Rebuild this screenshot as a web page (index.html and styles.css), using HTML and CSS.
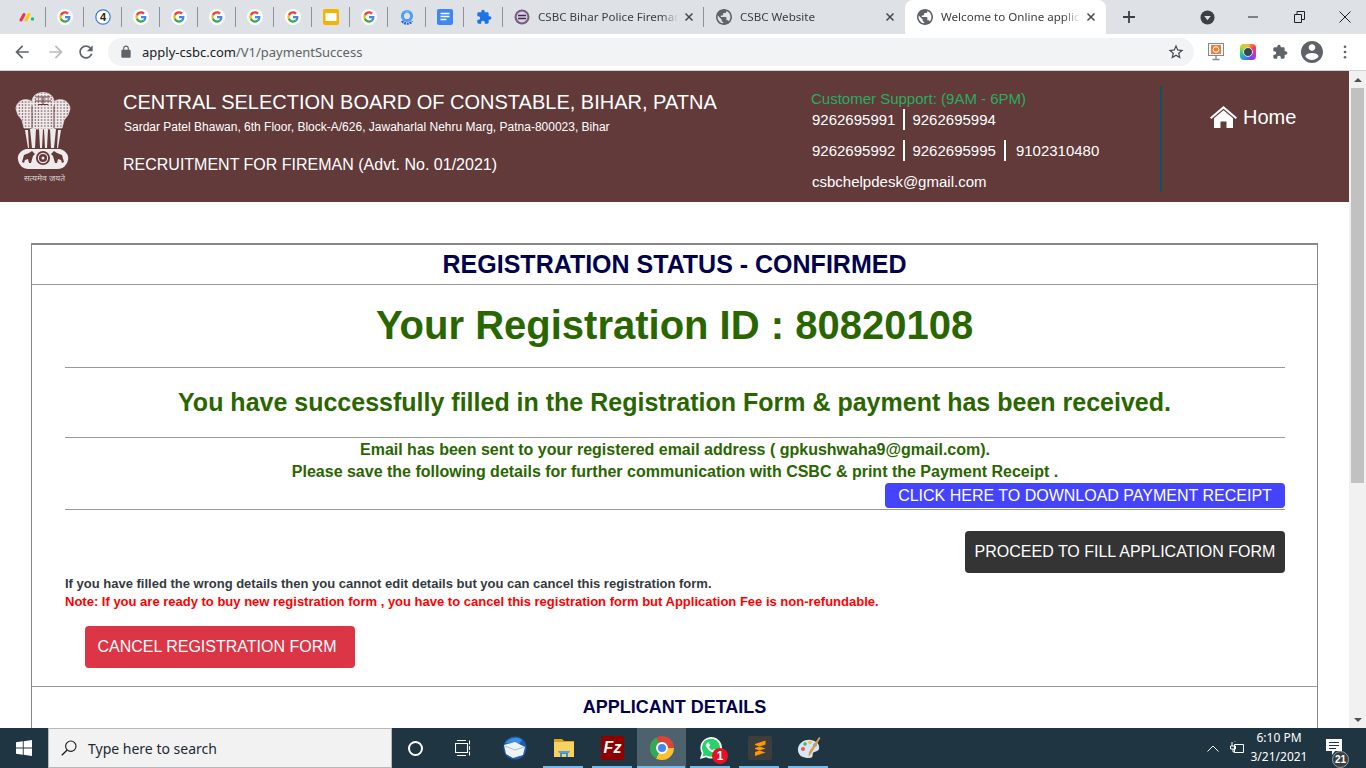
FILE: index.html
```html
<!DOCTYPE html>
<html lang="en">
<head>
<meta charset="utf-8">
<title>Welcome to Online application</title>
<link rel="stylesheet" href="styles.css">
</head>
<body>
<svg class="defs" width="0" height="0" aria-hidden="true">
  <defs>
    <symbol id="g" viewBox="-10 -10 68 68">
      <circle cx="24" cy="24" r="34" fill="#fff"/>
      <path fill="#EA4335" d="M24 9.5c3.54 0 6.71 1.22 9.21 3.6l6.85-6.85C35.9 2.38 30.47 0 24 0 14.62 0 6.51 5.38 2.56 13.22l7.98 6.19C12.43 13.72 17.74 9.5 24 9.5z"/>
      <path fill="#4285F4" d="M46.98 24.55c0-1.57-.15-3.09-.38-4.55H24v9.02h12.94c-.58 2.96-2.26 5.48-4.78 7.18l7.73 6c4.51-4.18 7.09-10.36 7.09-17.65z"/>
      <path fill="#FBBC05" d="M10.53 28.59c-.48-1.45-.76-2.99-.76-4.59s.27-3.14.76-4.59l-7.98-6.19C.92 16.46 0 20.12 0 24c0 3.88.92 7.54 2.56 10.78l7.97-6.19z"/>
      <path fill="#34A853" d="M24 48c6.48 0 11.93-2.13 15.89-5.81l-7.73-6c-2.15 1.45-4.92 2.3-8.16 2.3-6.26 0-11.57-4.22-13.47-9.91l-7.98 6.19C6.51 42.62 14.62 48 24 48z"/>
    </symbol>
    <symbol id="globe" viewBox="2 2 20 20">
      <path d="M12 2C6.48 2 2 6.48 2 12s4.48 10 10 10 10-4.48 10-10S17.52 2 12 2zm-1 17.93c-3.95-.49-7-3.85-7-7.93 0-.62.08-1.21.21-1.79L9 15v1c0 1.1.9 2 2 2v1.93zm6.9-2.54c-.26-.81-1-1.39-1.9-1.39h-1v-3c0-.55-.45-1-1-1H8v-2h2c.55 0 1-.45 1-1V7h2c1.1 0 2-.9 2-2v-.41c2.93 1.19 5 4.06 5 7.41 0 2.08-.8 3.97-2.1 5.39z"/>
    </symbol>
    <symbol id="puzzle" viewBox="0 0 24 24">
      <path d="M20.5 11H19V7c0-1.1-.9-2-2-2h-4V3.5C13 2.12 11.88 1 10.5 1S8 2.12 8 3.5V5H4c-1.1 0-1.99.9-1.99 2v3.8H3.5c1.49 0 2.7 1.21 2.7 2.7s-1.21 2.7-2.7 2.7H2V20c0 1.1.9 2 2 2h3.8v-1.5c0-1.49 1.21-2.7 2.7-2.7 1.49 0 2.7 1.21 2.7 2.7V22H17c1.1 0 2-.9 2-2v-4h1.5c1.38 0 2.5-1.12 2.5-2.5S21.88 11 20.5 11z"/>
    </symbol>
    <symbol id="x" viewBox="0 0 10 10">
      <path d="M1.5 1.5l7 7M8.5 1.5l-7 7" fill="none" stroke="#45484c" stroke-width="1.5"/>
    </symbol>
    <pattern id="mottle" width="3.2" height="3" patternUnits="userSpaceOnUse">
      <rect width="3.2" height="3" fill="#efeaec"/>
      <circle cx="1.1" cy="1" r=".75" fill="#63393a"/>
    </pattern>
  </defs>
</svg>

<div class="tabstrip">
  <div class="pin"><svg class="ico16" viewBox="0 0 16 16"><path d="M2 11L5 5.5" stroke="#f0314f" stroke-width="3" stroke-linecap="round"/><path d="M7 11l3-5.5" stroke="#ffcb00" stroke-width="3" stroke-linecap="round"/><circle cx="13.5" cy="10" r="1.7" fill="#00ca72"/></svg></div>
  <div class="pin"><svg class="ico16"><use href="#g"/></svg></div>
  <div class="pin"><svg class="ico16" viewBox="0 0 16 16"><circle cx="8" cy="8" r="7.2" fill="#fff" stroke="#3b78e7" stroke-width="1.2"/><text x="8" y="12" class="four">4</text></svg></div>
  <div class="pin"><svg class="ico16"><use href="#g"/></svg></div>
  <div class="pin"><svg class="ico16"><use href="#g"/></svg></div>
  <div class="pin"><svg class="ico16"><use href="#g"/></svg></div>
  <div class="pin"><svg class="ico16"><use href="#g"/></svg></div>
  <div class="pin"><svg class="ico16"><use href="#g"/></svg></div>
  <div class="pin"><svg class="ico16" viewBox="0 0 16 16"><rect width="16" height="16" rx="2" fill="#f4b400"/><rect x="2.5" y="4" width="11" height="8" fill="#fff"/></svg></div>
  <div class="pin"><svg class="ico16"><use href="#g"/></svg></div>
  <div class="pin"><svg class="ico16" viewBox="0 0 16 16"><circle cx="8" cy="7" r="4.6" fill="none" stroke="#4d9df5" stroke-width="3"/><path d="M3 12c2 3.500 8 3.500 10 0" fill="none" stroke="#2a5fd6" stroke-width="2.4" stroke-dasharray="2 .8"/><path d="M8 .6l2.5 3.4h-5z" fill="#6fb4f8"/></svg></div>
  <div class="pin"><svg class="ico16" viewBox="0 0 16 16"><rect width="16" height="16" rx="2" fill="#4285f4"/><path d="M3.5 4.5h9M3.5 7.5h9M3.5 10.5h6" stroke="#fff" stroke-width="1.5"/></svg></div>
  <div class="pin pin-last"><svg class="ico16 blue"><use href="#puzzle"/></svg></div>

  <div class="tab tab-first">
    <svg class="ico14" viewBox="0 0 16 16"><circle cx="8" cy="8" r="7.5" fill="#7b5a86"/><circle cx="8" cy="8" r="5.4" fill="#d9d3e0"/><path d="M4 6.5h8M4 9.5h8" stroke="#3a2a55" stroke-width="1.4"/></svg>
    <span class="tab-title">CSBC Bihar Police Fireman</span>
    <svg class="tab-x"><use href="#x"/></svg>
  </div>
  <div class="tab tab-second">
    <svg class="ico14 grey"><use href="#globe"/></svg>
    <span class="tab-title">CSBC Website</span>
    <svg class="tab-x"><use href="#x"/></svg>
  </div>
  <div class="tab tab-active">
    <svg class="ico14 grey"><use href="#globe"/></svg>
    <span class="tab-title">Welcome to Online application</span>
    <svg class="tab-x"><use href="#x"/></svg>
  </div>
  <svg class="newtab" viewBox="0 0 12 12"><path d="M6 0v12M0 6h12" stroke="#3c4043" stroke-width="1.8"/></svg>
  <div class="winctl">
    <svg class="profile" viewBox="0 0 16 16"><circle cx="8" cy="8" r="7.5" fill="#3c4043"/><path d="M4.5 6.5h7L8 11z" fill="#dee1e6"/></svg>
    <svg class="min" viewBox="0 0 10 10"><path d="M0 5h10" stroke="#202124"/></svg>
    <svg class="rest" viewBox="0 0 11 12"><path d="M.5 3.5h7v8h-7zM3 3.5V.5h7.5v8H7.5" fill="none" stroke="#202124"/></svg>
    <svg class="close" viewBox="0 0 12 12"><path d="M.5.5l11 11M11.500.5l-11 11" stroke="#202124"/></svg>
  </div>
</div>

<div class="toolbar">
  <svg class="nav" viewBox="0 0 24 24"><path d="M20 11H7.830l5.590-5.590L12 4l-8 8 8 8 1.410-1.410L7.830 13H20v-2z"/></svg>
  <svg class="nav nav-off" viewBox="0 0 24 24"><path d="M4 11h12.170l-5.590-5.590L12 4l8 8-8 8-1.410-1.410L16.170 13H4v-2z"/></svg>
  <svg class="nav nav-reload" viewBox="0 0 24 24"><path d="M17.650 6.350C16.200 4.900 14.210 4 12 4c-4.420 0-7.990 3.580-7.990 8s3.570 8 7.990 8c3.730 0 6.840-2.550 7.730-6h-2.080c-.82 2.330-3.040 4-5.650 4-3.310 0-6-2.690-6-6s2.690-6 6-6c1.660 0 3.140.69 4.220 1.780L13 11h7V4l-2.350 2.350z"/></svg>
  <div class="omnibox">
    <svg class="lock" viewBox="0 0 24 24"><path d="M18 8h-1V6c0-2.760-2.240-5-5-5S7 3.240 7 6v2H6c-1.100 0-2 .9-2 2v10c0 1.100.9 2 2 2h12c1.100 0 2-.9 2-2V10c0-1.100-.9-2-2-2zM9 6c0-1.660 1.340-3 3-3s3 1.340 3 3v2H9V6z"/></svg>
    <span class="url"><span class="url-host">apply-csbc.com</span>/V1/paymentSuccess</span>
    <svg class="star" viewBox="0 0 24 24"><path d="M22 9.240l-7.190-.62L12 2 9.190 8.630 2 9.240l5.460 4.730L5.820 21 12 17.270 18.180 21l-1.630-7.030L22 9.240zM12 15.400l-3.760 2.270 1-4.280-3.320-2.880 4.380-.38L12 6.100l1.710 4.040 4.380.38-3.320 2.880 1 4.280L12 15.400z"/></svg>
  </div>
  <div class="exts">
    <svg class="ext ext-screen" viewBox="0 0 16 18"><rect x=".5" y=".5" width="15" height="12" fill="#f4f6f8" stroke="#7d8b95"/><rect x="3" y="2" width="10" height="9" fill="#ee7f3a"/><circle cx="8" cy="6.500" r="2.800" fill="none" stroke="#fff"/><path d="M8 13v3M4.500 16.500h7" stroke="#7d8b95" stroke-width="1.300"/></svg>
    <div class="ext-lens"><span class="lens-core"></span></div>
    <svg class="ext ext-puzzle"><use href="#puzzle"/></svg>
    <svg class="avatar" viewBox="2 2 20 20"><path d="M12 2C6.480 2 2 6.480 2 12s4.480 10 10 10 10-4.480 10-10S17.520 2 12 2zm0 3c1.660 0 3 1.340 3 3s-1.340 3-3 3-3-1.340-3-3 1.340-3 3-3zm0 14.200c-2.500 0-4.710-1.280-6-3.220.03-1.990 4-3.080 6-3.080 1.990 0 5.970 1.090 6 3.080-1.290 1.940-3.500 3.220-6 3.220z"/></svg>
    <svg class="dots" viewBox="0 0 4 16"><circle cx="2" cy="2" r="1.500"/><circle cx="2" cy="8" r="1.500"/><circle cx="2" cy="14" r="1.500"/></svg>
  </div>
</div>

<div class="viewport">
  <main class="page">
    <header class="site-header">
      <div class="logo">
        <svg class="emblem" viewBox="0 0 56 79">
          <g fill="url(#mottle)" stroke="#efeaec" stroke-width=".7">
            <path d="M1 17c0-4 3-8 7-9 4-1 8 0 10 3l2 5-1 7 1 13H9l-2-8-4-5z"/>
            <path d="M55 17c0-4-3-8-7-9-4-1-8 0-10 3l-2 5 1 7-1 13h11l2-8 4-5z"/>
            <path d="M17 37l-1-14 3-7-2-6c0-6 5-9.500 11-9.500s11 3.500 11 9.500l-2 6 3 7-1 14z"/>
          </g>
          <path d="M21 5h14M20 9h16M23 12.500h10M28 5v8" stroke="#63393a" stroke-width="1"/>
          <path d="M17 14v22M39 14v22" stroke="#63393a" stroke-width=".9"/>
          <path d="M15 37l2 19h3l1-19zM24 37l1 19h2l1-19zM29 37l1 19h2l1-19zM35 37l1 19h3l2-19z" fill="#efeaec"/>
          <path d="M10 38l3 18h1l-1-18zM46 38l-3 18h-1l1-18z" fill="#efeaec"/>
          <path d="M11 57h34c6 2 9 6 8 11-1 5-5 9-10 9H13c-5 0-9-4-10-9-1-5 2-9 8-11z" fill="#efeaec"/>
          <circle cx="28" cy="66" r="7" fill="#63393a"/>
          <circle cx="28" cy="66" r="4.600" fill="none" stroke="#efeaec" stroke-width="1.100"/>
          <circle cx="28" cy="66" r="1.500" fill="#efeaec"/>
          <path d="M7 70l2-7 5-2 3-2 3 3-2 2-2 7h-2l-1-4-3 1-1 3zM49 70l-2-7-5-2-3-2-3 3 2 2 2 7h2l1-4 3 1 1 3z" fill="#63393a"/>
        </svg>
        <div class="motto">सत्यमेव जयते</div>
      </div>
      <div class="hinfo">
        <div class="board">CENTRAL SELECTION BOARD OF CONSTABLE, BIHAR, PATNA</div>
        <div class="addr">Sardar Patel Bhawan, 6th Floor, Block-A/626, Jawaharlal Nehru Marg, Patna-800023, Bihar</div>
        <div class="recruit">RECRUITMENT FOR FIREMAN (Advt. No. 01/2021)</div>
      </div>
      <div class="contact">
        <div class="support">Customer Support: (9AM - 6PM)</div>
        <div class="phones"><span class="ph ph-sep">9262695991</span><span class="ph">9262695994</span></div>
        <div class="phones"><span class="ph ph-sep">9262695992</span><span class="ph ph-sep">9262695995</span><span class="ph ph-last">9102310480</span></div>
        <div class="phones mail">csbchelpdesk@gmail.com</div>
      </div>
      <a class="home">
        <svg class="home-ico" viewBox="0 0 27 22"><path d="M13.500 0L0 11.500l1.300 1.500L13.500 2.700 25.700 13l1.300-1.500z" fill="#fff"/><path d="M13.500 4.300L4 12.300V22h6.500v-6.500h6V22H23v-9.700z" fill="#fff"/></svg>
        <span>Home</span>
      </a>
    </header>

    <section class="panel">
      <h2 class="status">REGISTRATION STATUS - CONFIRMED</h2>
      <div class="panel-body">
        <h1 class="regid">Your Registration ID : 80820108</h1>
        <hr class="rule">
        <h3 class="success">You have successfully filled in the Registration Form &amp; payment has been received.</h3>
        <hr class="rule">
        <p class="mailnote">Email has been sent to your registered email address ( gpkushwaha9@gmail.com).<br>Please save the following details for further communication with CSBC &amp; print the Payment Receipt .</p>
        <div class="right"><a class="btn btn-blue">CLICK HERE TO DOWNLOAD PAYMENT RECEIPT</a></div>
        <hr class="rule rule-tight">
        <div class="right right-gap"><a class="btn btn-dark">PROCEED TO FILL APPLICATION FORM</a></div>
        <p class="warn">If you have filled the wrong details then you cannot edit details but you can cancel this registration form.</p>
        <p class="warn warn-red">Note: If you are ready to buy new registration form , you have to cancel this registration form but Application Fee is non-refundable.</p>
        <a class="btn btn-red">CANCEL REGISTRATION FORM</a>
      </div>
      <h2 class="applicant">APPLICANT DETAILS</h2>
    </section>
  </main>
  <div class="scrollbar">
    <div class="sb-arrow"><span class="tri tri-up"></span></div>
    <div class="sb-thumb"></div>
    <div class="sb-track"></div>
    <div class="sb-arrow"><span class="tri tri-down"></span></div>
  </div>
</div>

<footer class="taskbar">
  <div class="start"><svg class="win" viewBox="0 0 16 16"><path d="M0 2.300L6.800 1.300V7.600H0zM7.700 1.200L16 0V7.600H7.700zM0 8.400H6.800V14.700L0 13.700zM7.700 8.400H16V16L7.700 14.800z" fill="#fff"/></svg></div>
  <div class="search">
    <svg class="glass" viewBox="0 0 16 16"><circle cx="9.800" cy="6.200" r="5.200" fill="none" stroke="#1a1a1a" stroke-width="1.100"/><path d="M6.200 10L.8 15.300" stroke="#1a1a1a" stroke-width="1.300"/></svg>
    <span class="search-text">Type here to search</span>
  </div>
  <div class="tb-sys"><span class="cortana"></span></div>
  <div class="tb-sys"><svg class="taskview" viewBox="0 0 16 16"><path d="M2 .5h9M2 15.500h9M.5 3.500h12v9H.5zM14.500.5v4M14.500 6v4M14.500 11.500v4" fill="none" stroke="#fff" stroke-width="1.100"/></svg></div>
  <div class="tb-app">
    <svg class="app" viewBox="0 0 24 24"><circle cx="12" cy="12" r="11.500" fill="#1f5fae"/><path d="M2 7c4-5 12-7 17-3l-3 4z" fill="#3d8fe0"/><path d="M1 9l11-3 10 5-2 8-10 3-7-4z" fill="#eef3f8"/><path d="M2 10l10 4 9-3" fill="none" stroke="#a8bdd2"/></svg>
  </div>
  <div class="tb-app tb-run">
    <svg class="app" viewBox="0 0 24 24"><path d="M2 3h8l2 2h10v4H2z" fill="#d9a520"/><rect x="2" y="6" width="20" height="15" fill="#fad35f"/><path d="M8 21v-6h8v6h-2v-3h-4v3z" fill="#3b8fd8"/><path d="M6 15h12l-1 2H7z" fill="#4aa3e8"/></svg>
  </div>
  <div class="tb-app tb-run">
    <div class="fz">Fz</div>
  </div>
  <div class="tb-app tb-run tb-active"><div class="chrome"><span class="chrome-core"></span></div></div>
  <div class="tb-app tb-run">
    <svg class="app" viewBox="0 0 24 24"><path d="M1 23l1.700-6A10.800 10.800 0 1 1 7 21.300z" fill="#fff"/><path d="M3.500 20.500l1-3.800A9 9 0 1 1 7.500 19.500z" fill="#25d366"/><path d="M8.500 6.500c-1.500 1-1.800 3-.5 5.300 1.500 2.500 4 4.500 6.300 4.800 1.500.2 3-.8 3.200-2l-2.700-1.500-1.200 1.200c-1.500-.5-3-2-3.600-3.500l1-1.200-1-3z" fill="#fff"/></svg>
    <span class="wa-badge">1</span>
  </div>
  <div class="tb-app tb-run">
    <svg class="app" viewBox="0 0 24 24"><rect width="24" height="24" rx="2" fill="#3d3d3d"/><path d="M17.500 4.500L7 8v4l10.500-3.500zM7 9l10.500 3.500v4L7 13zM17.500 12.500L7 16v4l10.500-3.500z" fill="#ff9800"/></svg>
  </div>
  <div class="tb-app tb-run">
    <svg class="app" viewBox="0 0 24 24"><path d="M1 15C0 8 7 3 14 4c6 .8 9 5 8 9-1 3-5 2-6 4s1 5-4 5C6 22 2 20 1 15z" fill="#d7e6f2"/><circle cx="6" cy="13" r="2" fill="#e05a4e"/><circle cx="8" cy="8" r="1.800" fill="#53b25b"/><circle cx="13" cy="6.500" r="1.800" fill="#f0c23d"/><circle cx="18" cy="9" r="1.800" fill="#4a90d9"/><path d="M22 1l1.500 1-9 15-3 4 .5-5z" fill="#d79a4c"/></svg>
  </div>
  <div class="tray">
    <svg class="chev" viewBox="0 0 12 7"><path d="M.5 6.500L6 1l5.500 5.500" fill="none" stroke="#fff"/></svg>
    <svg class="power" viewBox="0 0 16 14"><path d="M5.500 3.500h9v8h-9zM3 1v4M6 1v-.5M1.500 5h5v3h-5zM4 8v3h1.500" fill="none" stroke="#fff"/></svg>
    <div class="clock"><div>6:10 PM</div><div>3/21/2021</div></div>
    <div class="notif">
      <svg class="notif-ico" viewBox="0 0 16 16"><path d="M0 0h16v12H9l-3 4v-4H0z" fill="#fff"/><path d="M3 3.500h10M3 6.500h10M3 9.500h7" stroke="#1f3541"/></svg>
      <span class="notif-badge">21</span>
    </div>
  </div>
</footer>
</body>
</html>
```

FILE: styles.css
```css
* { box-sizing: border-box; }
html, body { margin: 0; padding: 0; height: 100%; }
body {
  width: 1366px;
  height: 768px;
  overflow: hidden;
  display: flex;
  flex-direction: column;
  background: #fff;
  font-family: "Liberation Sans", Arial, sans-serif;
}
.defs { position: absolute; }

/* tab strip */
.tabstrip {
  height: 34px;
  flex: none;
  display: flex;
  align-items: center;
  padding-left: 8px;
  background: #dee1e6;
  font: 11.6px "Noto Sans", sans-serif;
  color: #3c4043;
}
.pin {
  width: 38px;
  height: 20px;
  flex: none;
  display: flex;
  align-items: center;
  justify-content: center;
  border-right: 1px solid #8f9296;
  padding-left: 1px;
}
.pin-last { border-right: 0; }
.ico16 { width: 16px; height: 16px; flex: none; }
.ico14 { width: 16px; height: 16px; flex: none; }
.blue { fill: #1a73e8; }
.grey { fill: #5f6368; }
.four { font: bold 11px "Liberation Sans", sans-serif; fill: #222; text-anchor: middle; }
.tab {
  height: 34px;
  flex: none;
  display: flex;
  align-items: center;
  position: relative;
}
.tab-first {
  width: 202px;
  padding-left: 11px;
  border-left: 1px solid #8f9296;
  height: 20px;
  border-right: 1px solid #8f9296;
}
.tab-second { width: 201px; padding-left: 12px; }
.tab-active {
  width: 201px;
  padding-left: 12px;
  background: #fff;
  border-radius: 8px 8px 0 0;
}
.tab-title {
  margin-left: 8px;
  padding-bottom: 2px;
  flex: 1;
  min-width: 0;
  white-space: nowrap;
  overflow: hidden;
  -webkit-mask-image: linear-gradient(to right, #000 88%, transparent);
  mask-image: linear-gradient(to right, #000 88%, transparent);
}
.tab-x { width: 10px; height: 10px; flex: none; margin: 0 10px 0 6px; }
.tab-first .tab-x { margin-right: 9px; }
.newtab { width: 12px; height: 12px; flex: none; margin-left: 17px; }
.winctl { flex: 1; display: flex; align-items: center; height: 34px; }
.profile { width: 15px; height: 15px; flex: none; margin-left: 65px; }
.min { width: 10px; height: 10px; flex: none; margin-left: 33px; }
.rest { width: 11px; height: 12px; flex: none; margin-left: 36px; }
.close { width: 12px; height: 12px; flex: none; margin-left: 34px; }

/* toolbar */
.toolbar {
  height: 37px;
  flex: none;
  display: flex;
  align-items: center;
  background: #fff;
  padding-left: 12px;
  border-bottom: 1px solid #cfd2d6;
  font: 13px "Noto Sans", sans-serif;
}
.nav { width: 20px; height: 20px; flex: none; fill: #5f6368; }
.nav-off { fill: #b9bbbe; margin-left: 14px; }
.nav-reload { margin-left: 10px; }
.omnibox {
  width: 1086px;
  height: 28px;
  margin-left: 12px;
  flex: none;
  display: flex;
  align-items: center;
  background: #f1f3f4;
  border-radius: 14px;
  padding-left: 11px;
  color: #5f6368;
}
.lock { width: 14px; height: 14px; fill: #5f6368; flex: none; }
.url { margin-left: 9px; flex: 1; }
.url-host { color: #202124; }
.star { width: 18px; height: 18px; fill: #45484c; flex: none; margin-right: 9px; }
.exts { display: flex; align-items: center; flex: 1; }
.ext-screen { width: 16px; height: 18px; margin-left: 14px; flex: none; }
.ext-lens {
  width: 16px;
  height: 16px;
  margin-left: 16px;
  flex: none;
  border-radius: 4px;
  background: conic-gradient(#ffb52e, #f5433c, #d42fd0, #7b3ff2, #2f8cf5, #27c98f, #b8d92e, #ffb52e);
  display: flex;
  align-items: center;
  justify-content: center;
}
.lens-core { width: 10px; height: 10px; border-radius: 50%; background: #33475b; border: 1px solid #dfe7ee; }
.ext-puzzle { width: 16px; height: 16px; fill: #5f6368; margin-left: 16px; flex: none; }
.avatar { width: 22px; height: 22px; fill: #5f6368; margin-left: 13px; flex: none; }
.dots { width: 4px; height: 14px; fill: #5f6368; margin-left: 20px; flex: none; }

/* page viewport */
.viewport { flex: 1; min-height: 0; display: flex; overflow: hidden; }
.page { width: 1349px; flex: none; overflow: hidden; }
.site-header {
  height: 131px;
  display: flex;
  background: #633a3a;
  color: #fff;
}
.logo { width: 123px; flex: none; padding: 21px 0 0 15px; }
.emblem { display: block; width: 56px; height: 79px; }
.motto {
  width: 56px;
  margin-top: 1px;
  padding-left: 3px;
  text-align: center;
  font: 8.5px "Noto Sans", "DejaVu Sans", sans-serif;
  color: #d8cfcf;
  white-space: nowrap;
}
.hinfo { width: 688px; flex: none; padding-top: 20px; }
.board { font-size: 20px; line-height: 23px; white-space: nowrap; }
.addr { font-size: 12px; line-height: 14px; margin-top: 6px; padding-left: 1px; white-space: nowrap; }
.recruit { font-size: 16px; line-height: 18px; margin-top: 22px; }
.contact {
  width: 351px;
  flex: none;
  margin: 15px 0 10px;
  padding-top: 4px;
  border-right: 2px solid #0d5460;
}
.support { font-size: 15px; line-height: 18px; color: #27ae60; }
.phones { display: flex; align-items: center; height: 21px; margin: 1px 0 10px 1px; font-size: 15px; }
.phones + .phones { margin-top: 0; }
.mail { margin-bottom: 0; }
.ph { line-height: 21px; padding-right: 8px; margin-right: 7px; }
.ph-sep { border-right: 2px solid #fff; }
.ph-last { margin-left: 3px; }
.home { flex: 1; display: flex; align-items: center; height: 22px; margin-top: 35px; padding-left: 48px; font-size: 20px; }
.home-ico { width: 27px; height: 22px; flex: none; margin-right: 6px; }

/* panel */
.panel {
  margin: 41px 31px 0;
  border: 1px solid #888;
  border-top-width: 2px;
  background: #fff;
}
.status {
  margin: 0;
  height: 40px;
  border-bottom: 1px solid #999;
  text-align: center;
  font-size: 25px;
  line-height: 38px;
  color: #00004d;
}
.panel-body { padding: 0 32px 18px 33px; border-bottom: 1px solid #999; }
.regid {
  margin: 0;
  height: 82px;
  padding-right: 1px;
  text-align: center;
  font-size: 40px;
  line-height: 81px;
  color: #2a6600;
}
.rule { margin: 0; height: 1px; border: 0; background: #999; }
.rule-tight { margin-top: 1px; }
.success {
  margin: 0;
  height: 69px;
  padding-right: 1px;
  text-align: center;
  font-size: 25px;
  line-height: 69px;
  color: #2a6600;
}
.mailnote {
  margin: 0;
  padding-top: 1px;
  text-align: center;
  font-size: 16px;
  font-weight: bold;
  line-height: 22px;
  color: #2a6600;
}
.right { display: flex; justify-content: flex-end; }
.right-gap { margin-top: 21px; }
.btn {
  display: flex;
  align-items: center;
  justify-content: center;
  color: #fff;
  font-size: 16px;
  border-radius: 4px;
  white-space: nowrap;
}
.btn-blue { width: 400px; height: 25px; background: #4444ff; }
.btn-dark { width: 320px; height: 42px; background: #343434; }
.btn-red { width: 270px; height: 42px; margin: 15px 0 0 20px; background: #dc3545; padding-right: 6px; }
.warn {
  margin: 0;
  font-size: 13px;
  font-weight: bold;
  line-height: 18px;
  color: #343a40;
}
.right-gap + .warn { margin-top: 2px; }
.warn-red { color: #ff0000; }
.applicant {
  margin: 0;
  height: 60px;
  text-align: center;
  font-size: 18px;
  line-height: 41px;
  color: #00004d;
}

/* scrollbar */
.scrollbar { width: 17px; flex: none; display: flex; flex-direction: column; background: #f1f1f1; }
.sb-arrow { height: 17px; flex: none; display: flex; align-items: center; justify-content: center; }
.tri { width: 0; height: 0; border-left: 4px solid transparent; border-right: 4px solid transparent; }
.tri-up { border-bottom: 4px solid #505050; }
.tri-down { border-top: 4px solid #505050; }
.sb-thumb { height: 395px; flex: none; margin: 0 2px; background: #c1c1c1; }
.sb-track { flex: 1; }

/* taskbar */
.taskbar {
  height: 40px;
  flex: none;
  display: flex;
  align-items: stretch;
  background: #1f3541;
  color: #fff;
  font-family: "Noto Sans", sans-serif;
}
.start { width: 48px; flex: none; display: flex; align-items: center; justify-content: center; }
.win { width: 16px; height: 16px; }
.search {
  width: 344px;
  flex: none;
  display: flex;
  align-items: center;
  background: #f2f2f2;
  border: 1px solid #b5b9bc;
  padding-left: 12px;
  color: #1a2a35;
  font-size: 14px;
}
.glass { width: 16px; height: 16px; flex: none; }
.search-text { margin-left: 11px; }
.tb-sys { width: 47px; flex: none; display: flex; align-items: center; justify-content: center; }
.cortana { width: 15px; height: 15px; border-radius: 50%; border: 2px solid #fff; }
.taskview { width: 16px; height: 16px; }
.tb-app {
  width: 49px;
  flex: none;
  display: flex;
  align-items: center;
  justify-content: center;
  position: relative;
}
.tb-sys + .tb-sys { margin-right: 4px; }
.tb-run::after {
  content: "";
  position: absolute;
  left: 4px;
  right: 5px;
  bottom: 0;
  height: 2px;
  background: #76b9ed;
}
.tb-active { background: #4d626c; }
.tb-active::after { left: 0; right: 1px; }
.app { width: 24px; height: 24px; }
.fz {
  width: 23px;
  height: 24px;
  background: #8f0000;
  color: #fff;
  font: italic bold 16px/24px "Liberation Sans", sans-serif;
  text-align: center;
}
.chrome {
  width: 24px;
  height: 24px;
  border-radius: 50%;
  background: conic-gradient(#db4437 0deg, #db4437 90deg, #fbc02d 90deg, #fbc02d 210deg, #34a853 210deg, #34a853 330deg, #db4437 330deg);
  display: flex;
  align-items: center;
  justify-content: center;
}
.chrome-core { box-sizing: content-box; width: 8px; height: 8px; border-radius: 50%; background: #4285f4; border: 2px solid #fff; }
.wa-badge {
  position: absolute;
  left: 26px;
  top: 20px;
  width: 16px;
  height: 16px;
  border-radius: 50%;
  background: #e81123;
  color: #fff;
  font: bold 12px/16px "Liberation Sans", sans-serif;
  text-align: center;
}
.tray { flex: 1; display: flex; align-items: center; padding-left: 374px; }
.chev { width: 12px; height: 7px; flex: none; }
.power { width: 16px; height: 14px; flex: none; margin-left: 10px; }
.clock { width: 68px; flex: none; padding-bottom: 2px; text-align: center; font-size: 12px; line-height: 19px; }
.notif { position: relative; width: 24px; height: 40px; margin-left: 9px; flex: none; }
.notif-ico { position: absolute; left: 4px; top: 11px; width: 16px; height: 16px; }
.notif-badge {
  position: absolute;
  left: 10px;
  top: 23px;
  width: 17px;
  height: 17px;
  border-radius: 50%;
  background: #3a3f42;
  border: 1px solid #9aa0a4;
  font: bold 10px/15px "Liberation Sans", sans-serif;
  text-align: center;
  color: #fff;
}
```
